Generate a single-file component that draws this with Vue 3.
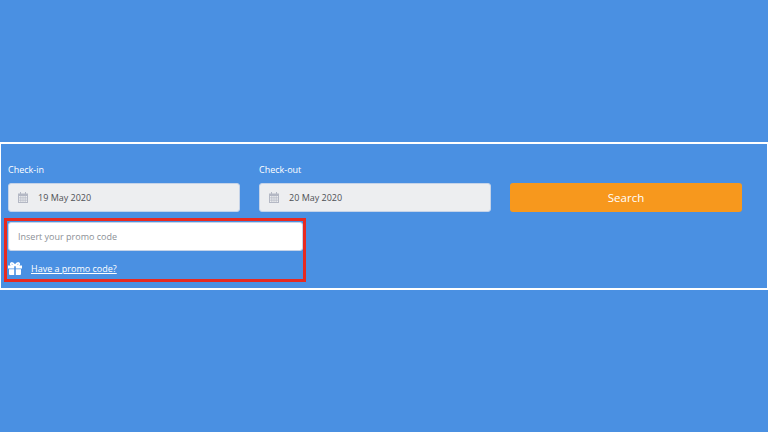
<script setup>
const fields = [
  { label: 'Check-in', value: '19 May 2020' },
  { label: 'Check-out', value: '20 May 2020' },
]
</script>

<template>
  <div class="page">
    <section class="band">
      <div class="row">
        <div v-for="f in fields" :key="f.label" class="field">
          <label class="label">{{ f.label }}</label>
          <div class="date">
            <svg class="cal" width="10" height="11" viewBox="0 0 10 11">
              <path fill="#b4b8c4" d="M2 0h1v1.500h4V0h1v1.500h2V11H0V1.500h2zM1 4v1.500h1.500V4zm2.200 0v1.500h1.500V4zm2.100 0v1.500h1.500V4zm2.200 0v1.500H9V4zM1 6.200v1.500h1.500V6.200zm2.200 0v1.500h1.500V6.200zm2.100 0v1.500h1.500V6.200zm2.200 0v1.500H9V6.200zM1 8.400V10h1.500V8.400zm2.200 0V10h1.500V8.400zm2.100 0V10h1.500V8.400zm2.200 0V10H9V8.400z"/>
            </svg>
            <span>{{ f.value }}</span>
          </div>
        </div>
        <button class="search">Search</button>
      </div>
      <div class="promo">
        <div class="promo-input">Insert your promo code</div>
        <div class="promo-link">
          <svg width="14" height="13" viewBox="0 0 14 13">
            <path fill="#fff" d="M0 3.500h6.200v3H0zM7.800 3.500H14v3H7.800zM1 7.300h5.200V13H2a1 1 0 0 1-1-1zM7.800 7.300H13V12a1 1 0 0 1-1 1H7.800z"/>
            <path fill="none" stroke="#fff" stroke-width="1.700" d="M6.700 3.300C5.400 1.300 4.400.8 3.500 1 2.500 1.200 2.500 2.700 3.300 3.300zM7.300 3.300C8.600 1.300 9.600.8 10.500 1c1 .2 1 1.700.2 2.300z"/>
          </svg>
          <a class="link">Have a promo code?</a>
        </div>
      </div>
    </section>
  </div>
</template>

<style>
html, body { margin: 0; background: #4a90e2; }
</style>

<style scoped>
.page {
  width: 768px;
  height: 432px;
  overflow: hidden;
  background: #4a90e2;
  font-family: "Open Sans", "Noto Sans", sans-serif;
  padding-top: 142px;
  box-sizing: border-box;
}
.band {
  box-sizing: border-box;
  height: 148px;
  border: 2px solid #fff;
  border-left-width: 1px;
  border-right-width: 1px;
  padding: 19px 0 0 7px;
}
.row {
  display: flex;
  gap: 19px;
  align-items: flex-end;
}
.field { width: 232px; }
.label {
  display: block;
  font-size: 9px;
  line-height: 14px;
  color: #fff;
  margin-bottom: 6px;
}
.date {
  box-sizing: border-box;
  height: 29px;
  display: flex;
  align-items: center;
  gap: 10px;
  padding-left: 9px;
  background: #edeef0;
  border: 1px solid #c5d3e8;
  border-radius: 3px;
  font-size: 9px;
  color: #4d5156;
}
.cal { flex: none; }
.search {
  width: 232px;
  height: 29px;
  padding: 0;
  border: 0;
  border-radius: 3px;
  background: #f7981d;
  color: #fff;
  font-family: inherit;
  font-size: 11.500px;
}
.promo {
  box-sizing: border-box;
  width: 302px;
  height: 64px;
  margin: 6px 0 0 -4px;
  padding: 1px 0 0 1px;
  border: 3px solid #e82a20;
}
.promo-input {
  box-sizing: border-box;
  height: 29px;
  display: flex;
  align-items: center;
  padding-left: 9px;
  background: #fff;
  border: 1px solid #c5d3e8;
  border-radius: 3px;
  font-size: 9px;
  color: #8b8f96;
}
.promo-link {
  display: flex;
  align-items: center;
  gap: 9px;
  margin-top: 11px;
}
.link {
  font-size: 9px;
  color: #fff;
  text-decoration: underline;
}
</style>
